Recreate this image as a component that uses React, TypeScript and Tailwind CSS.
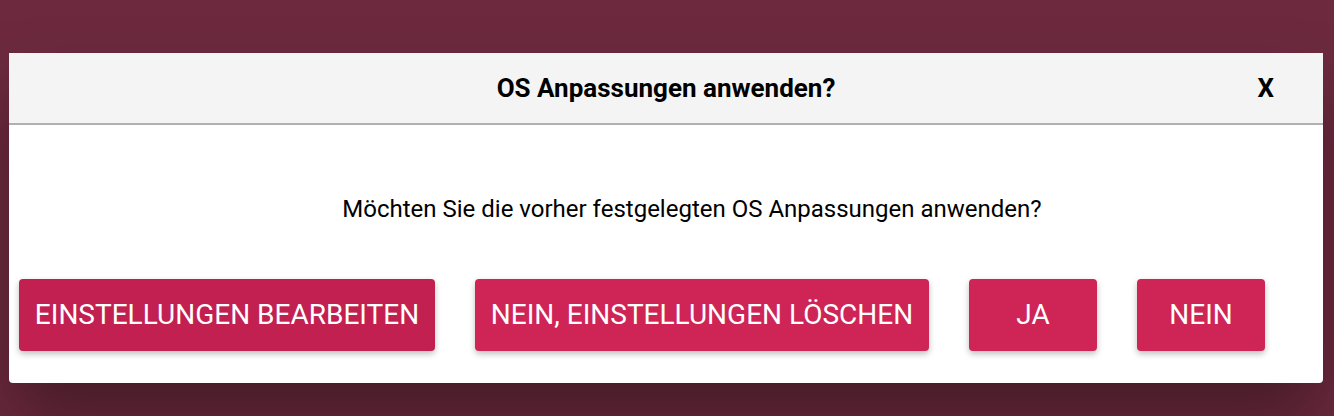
export default function App() {
  const buttons = [
    { label: "Einstellungen bearbeiten", cls: "w-[416px] bg-[#c22051]" },
    { label: "Nein, Einstellungen löschen", cls: "w-[454px] bg-[#ce2456]" },
    { label: "Ja", cls: "w-[128px] bg-[#ce2456]" },
    { label: "Nein", cls: "w-[128px] bg-[#ce2456]" },
  ];

  return (
    <div
      className="h-[416px] w-full overflow-hidden bg-[#6d2a3f] pt-[53px] pl-[9px] pr-[11px]"
      style={{ fontFamily: "Roboto, 'Noto Sans', sans-serif" }}
    >
      <div className="w-[1314px] rounded-b-[4px] bg-white shadow-[0_40px_70px_rgba(0,0,0,0.35)]">
        {/* Header */}
        <div className="relative flex h-[72px] items-center justify-center border-b-2 border-[#b0b0b0] bg-[#f4f4f4]">
          <h2 className="text-[26px] font-bold text-black">OS Anpassungen anwenden?</h2>
          <button className="absolute right-[49px] top-1/2 -translate-y-1/2 text-[26px] font-bold text-black">
            X
          </button>
        </div>

        {/* Body */}
        <div className="pt-[69px] pb-[32px]">
          <p className="pl-[52px] text-center text-[24px] leading-[30px] text-black">
            Möchten Sie die vorher festgelegten OS Anpassungen anwenden?
          </p>
          <div className="mt-[55px] flex gap-[40px] pl-[10px]">
            {buttons.map((b) => (
              <button
                key={b.label}
                className={`flex h-[72px] items-center justify-center whitespace-nowrap rounded-[4px] text-[28px] uppercase text-white shadow-[0_3px_6px_rgba(0,0,0,0.25)] ${b.cls}`}
              >
                {b.label}
              </button>
            ))}
          </div>
        </div>
      </div>
    </div>
  );
}
